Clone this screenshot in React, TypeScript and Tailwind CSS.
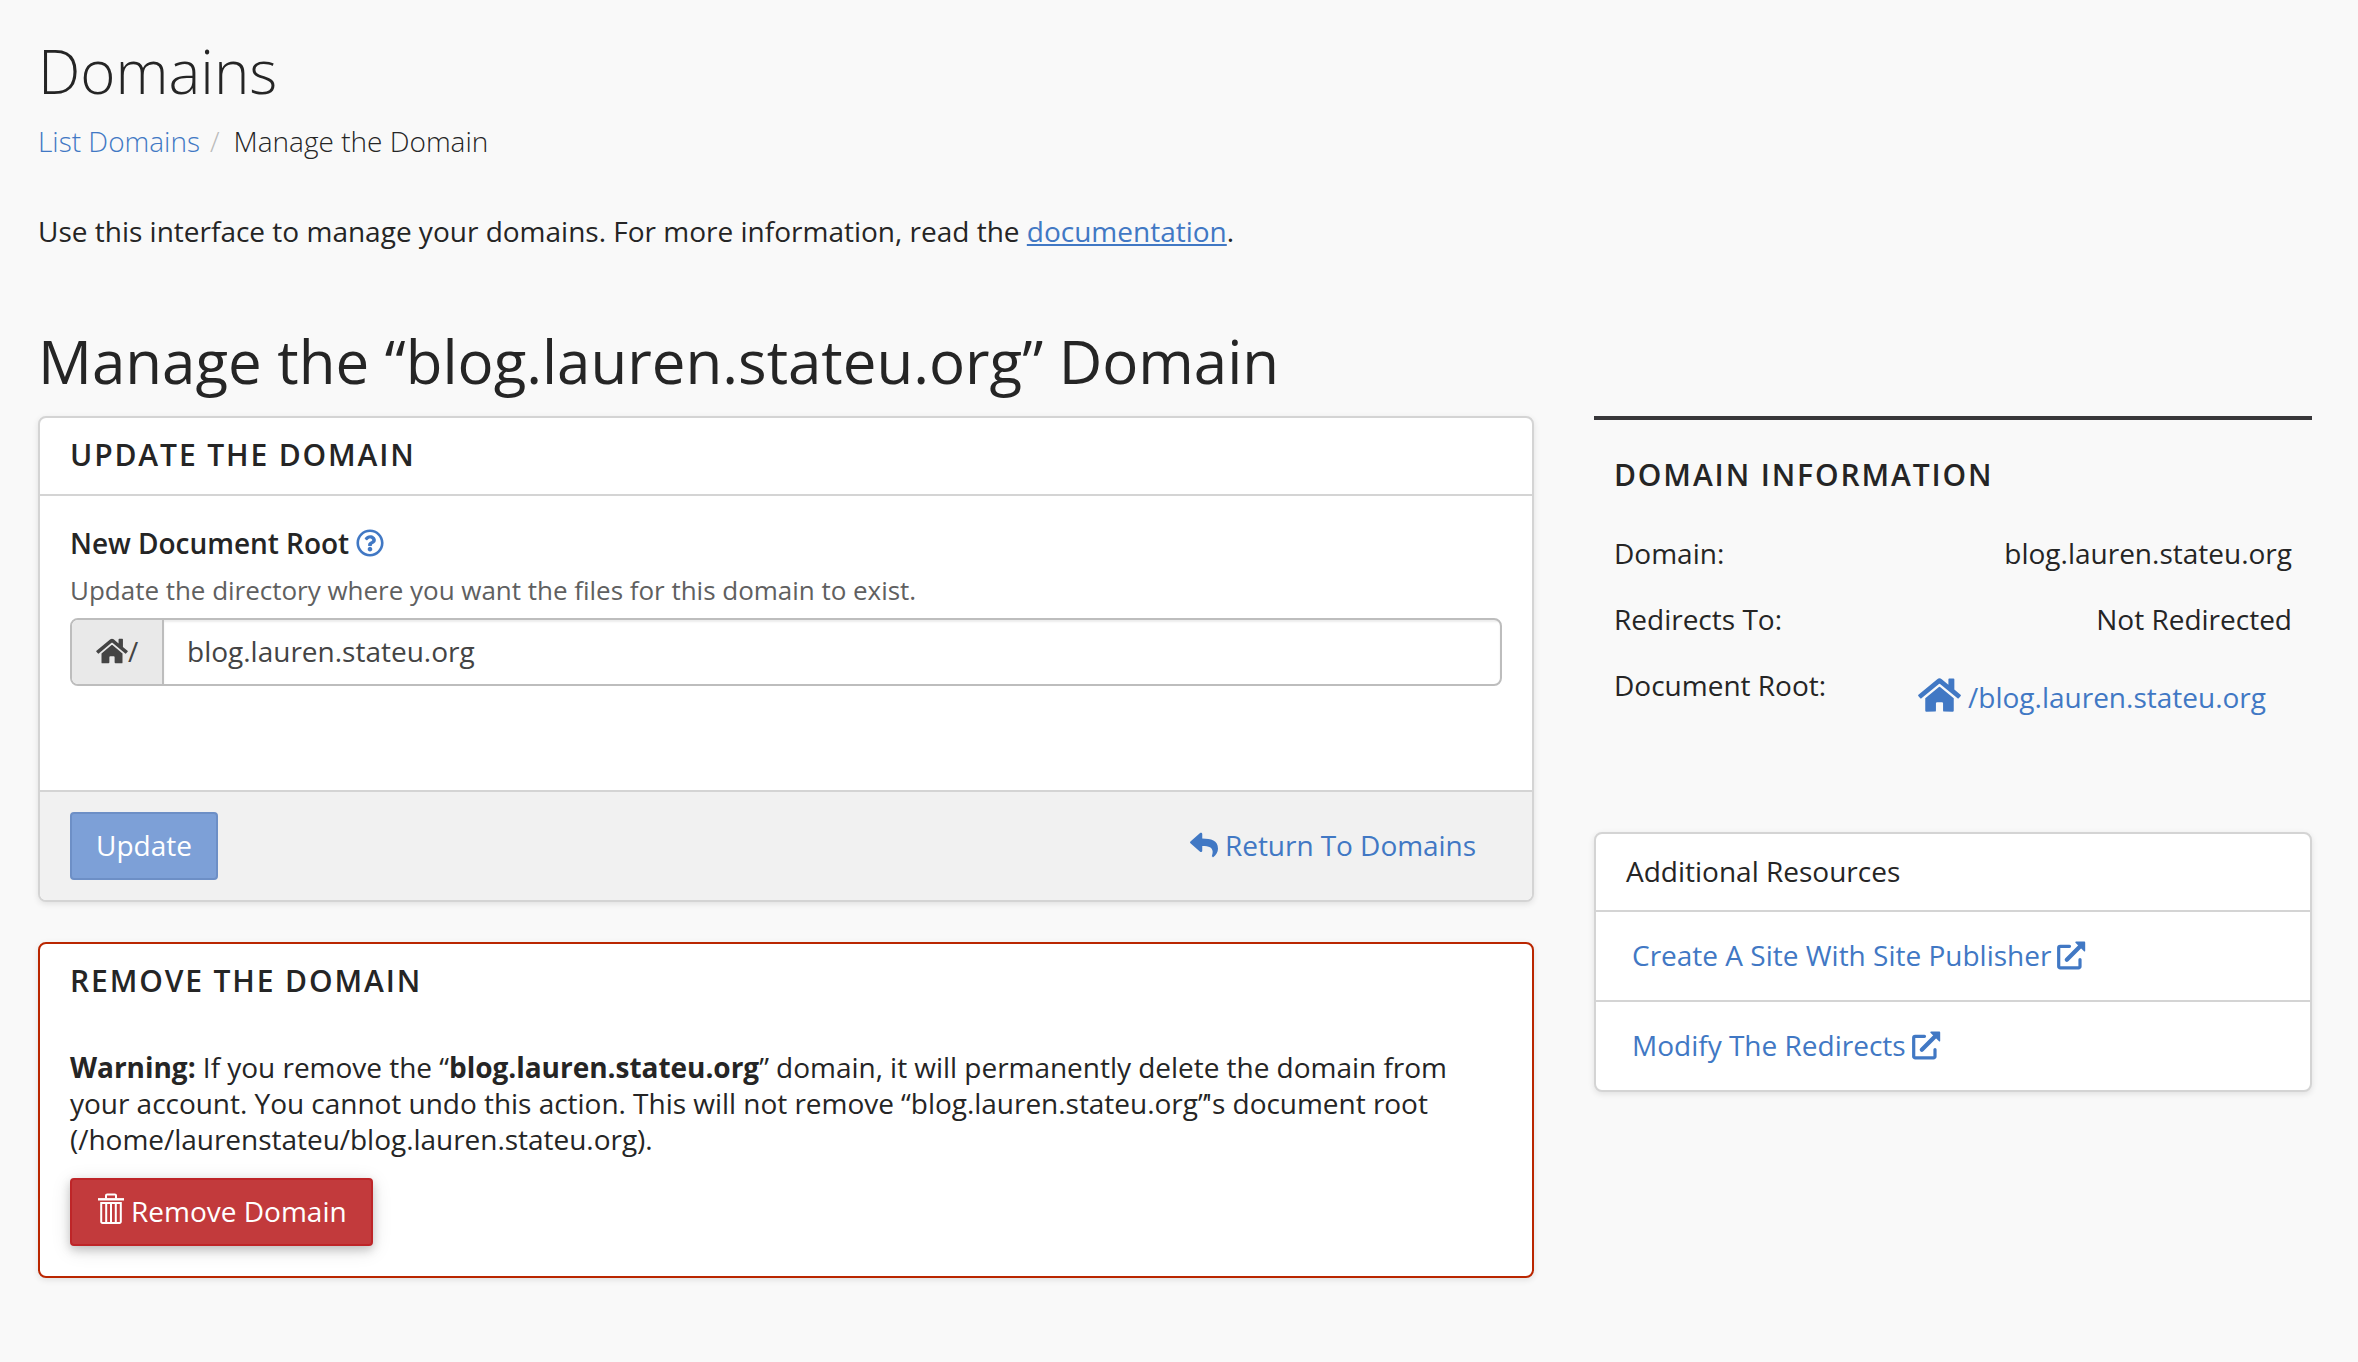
import type { ReactNode } from "react";
import { FaHome, FaRegQuestionCircle, FaReply } from "react-icons/fa";

const domain = "blog.lauren.stateu.org";

function TrashIcon() {
  return (
    <svg className="h-[31px] w-[26px]" viewBox="0 0 26 31" fill="none" stroke="currentColor">
      <path d="M8 5.5V2.6a1.2 1.2 0 0 1 1.2-1.2h7.6A1.2 1.2 0 0 1 18 2.6V5.5" strokeWidth="2" />
      <path d="M0 6.3H26" strokeWidth="2.4" />
      <path d="M3.2 9.9H22.8V28.8a1.2 1.2 0 0 1-1.2 1.2H4.4a1.2 1.2 0 0 1-1.2-1.2Z" strokeWidth="2" />
      <path d="M8.2 10V30M13 10V30M17.8 10V30" strokeWidth="2" />
    </svg>
  );
}

function ExternalIcon() {
  return (
    <svg className="h-[29px] w-[29px]" viewBox="0 0 29 29" fill="none" stroke="currentColor">
      <path
        d="M12.5 5.3H3.2a1.5 1.5 0 0 0-1.5 1.5V25.4a1.5 1.5 0 0 0 1.5 1.5H21.5a1.5 1.5 0 0 0 1.5-1.5V18.5"
        strokeWidth="3.2"
        strokeLinecap="round"
      />
      <path d="M9.8 18.8L23.5 5" strokeWidth="4.2" strokeLinecap="round" />
      <path d="M19 .6H27.4a.8.8 0 0 1 .8.8V9.8a.7.7 0 0 1-1.2.5L18.5 1.8A.7.7 0 0 1 19 .6Z" fill="currentColor" stroke="none" />
    </svg>
  );
}

function SectionTitle({ children }: { children: ReactNode }) {
  return <h3 className="text-[30px] leading-[36px] font-semibold tracking-[1.88px] uppercase">{children}</h3>;
}

function InfoRow({ label, children }: { label: string; children: ReactNode }) {
  return (
    <div className="flex h-[66px] items-start justify-between">
      <span>{label}</span>
      {children}
    </div>
  );
}

function ResourceLink({ children }: { children: ReactNode }) {
  return (
    <li className="h-[90px] border-t-2 border-[#d4d4d4] pt-[25px] pl-[36px]">
      <a className="flex items-start gap-[6px] text-[#4178c4]">
        {children}
        <span className="mt-[4px]">
          <ExternalIcon />
        </span>
      </a>
    </li>
  );
}

export default function App() {
  return (
    <div className="min-h-[1362px] bg-[#f9f9f9] pt-[29px] pr-[46px] pl-[38px] font-['Open_Sans',sans-serif] text-[28px] leading-[36px] text-[#252525]">
      <h1 className="text-[60px] leading-[84px] font-light">Domains</h1>
      <nav className="mt-[10px] flex font-light">
        <a className="text-[#4178c4]">List Domains</a>
        <span className="mr-[14px] ml-[10px] text-[#bbb]">/</span>
        <span>Manage the Domain</span>
      </nav>
      <p className="mt-[54px]">
        Use this interface to manage your domains. For more information, read the{" "}
        <a className="text-[#4178c4] underline">documentation</a>.
      </p>
      <h2 className="mt-[70px] text-[60px] leading-[84px]">Manage the “{domain}” Domain</h2>

      <div className="mt-[13px] flex items-start justify-between">
        <main className="flex w-[1496px] flex-col gap-[40px]">
          <section className="overflow-hidden rounded-[8px] border-2 border-[#d4d4d4] bg-white shadow-[0_2px_6px_rgba(0,0,0,0.1)]">
            <header className="h-[78px] border-b-2 border-[#d4d4d4] px-[30px] pt-[19px]">
              <SectionTitle>Update the Domain</SectionTitle>
            </header>
            <div className="h-[294px] px-[30px] pt-[29px]">
              <label className="flex gap-[7px] font-semibold tracking-[-0.03px]">
                New Document Root
                <FaRegQuestionCircle className="mt-[4px] size-[28px] text-[#4178c4]" />
              </label>
              <p className="mt-[11px] text-[26px] tracking-[-0.02px] text-[#606060]">
                Update the directory where you want the files for this domain to exist.
              </p>
              <div className="mt-[10px] flex h-[68px] overflow-hidden rounded-[8px] border-2 border-[#bdbdbd] text-[#444]">
                <span className="flex w-[92px] border-r-2 border-[#bdbdbd] bg-[#e9e9e9] pt-[13px] pl-[24px]">
                  <FaHome className="mt-[4px] h-[28px] w-[32px]" />/
                </span>
                <span className="flex-1 pt-[13px] pl-[23px] shadow-[inset_0_2px_2px_rgba(0,0,0,0.075)]">{domain}</span>
              </div>
            </div>
            <footer className="flex h-[110px] items-start justify-between border-t-2 border-[#d4d4d4] bg-[#f1f1f1] px-[20px] pt-[20px]">
              <button className="ml-[10px] h-[68px] w-[148px] rounded-[4px] border-2 border-[#6d8fc6] bg-[#7da0d7] pb-[2px] text-white">
                Update
              </button>
              <a className="flex gap-[7px] pt-[15px] pr-[36px] tracking-[-0.05px] text-[#4178c4]">
                <FaReply className="mt-[4px] size-[28px]" />
                Return To Domains
              </a>
            </footer>
          </section>

          <section className="h-[336px] rounded-[8px] border-2 border-[#ba2600] bg-white px-[30px] pt-[19px] shadow-[0_2px_6px_rgba(0,0,0,0.1)]">
            <SectionTitle>Remove the Domain</SectionTitle>
            <p className="mt-[50px] tracking-[-0.03px]">
              <b>Warning:</b> If you remove the “<b>{domain}</b>” domain, it will permanently delete the domain from your
              account. You cannot undo this action. This will not remove “{domain}
              <span className="tracking-[-1.8px]">”</span>'s document root (/home/laurenstateu/{domain}).
            </p>
            <button className="mt-[21px] flex h-[68px] w-[303px] items-start gap-[7px] rounded-[4px] border-2 border-[#be2528] bg-[#c23a3c] pt-[13px] pl-[26px] text-white shadow-[0_4px_10px_rgba(0,0,0,0.18),0_4px_20px_rgba(0,0,0,0.12)]">
              <TrashIcon />
              Remove Domain
            </button>
          </section>
        </main>

        <aside className="w-[718px]">
          <section className="h-[416px] border-t-4 border-[#38373a] px-[20px] pt-[37px]">
            <SectionTitle>Domain Information</SectionTitle>
            <div className="mt-[42px]">
              <InfoRow label="Domain:">{domain}</InfoRow>
              <InfoRow label="Redirects To:">Not Redirected</InfoRow>
              <InfoRow label="Document Root:">
                <a className="flex gap-[7px] pt-[12px] pr-[26px] text-[#4178c4]">
                  <FaHome className="-mt-[3px] h-[38px] w-[43px]" />/{domain}
                </a>
              </InfoRow>
            </div>
          </section>
          <section className="rounded-[8px] border-2 border-[#d4d4d4] bg-white shadow-[0_2px_6px_rgba(0,0,0,0.1)]">
            <h4 className="h-[76px] px-[30px] pt-[19px]">Additional Resources</h4>
            <ul>
              <ResourceLink>Create A Site With Site Publisher</ResourceLink>
              <ResourceLink>Modify The Redirects</ResourceLink>
            </ul>
          </section>
        </aside>
      </div>
    </div>
  );
}
